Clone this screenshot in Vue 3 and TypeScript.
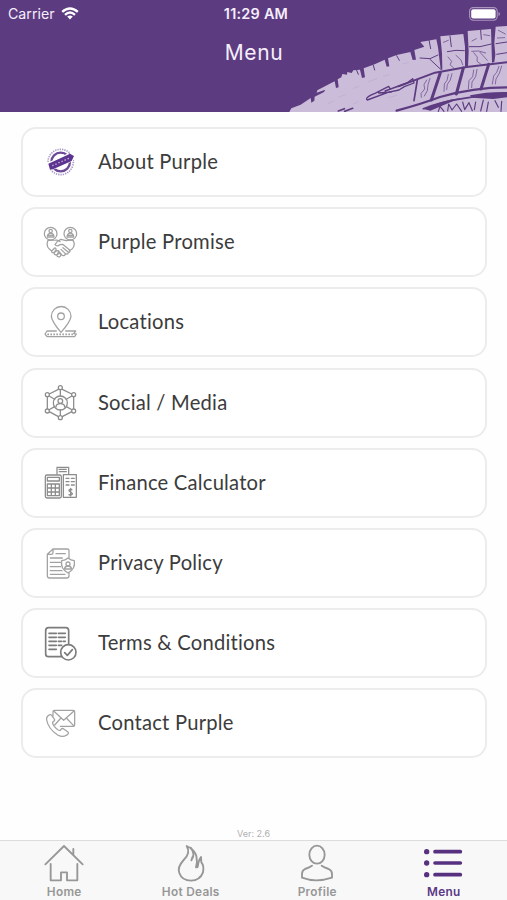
<script setup lang="ts">
type IconName = 'about' | 'promise' | 'locations' | 'social' | 'finance' | 'privacy' | 'terms' | 'contact'

interface MenuItem {
  label: string
  icon: IconName
  box: string
}

interface Tab {
  label: string
  icon: string
  active?: boolean
}

const items: MenuItem[] = [
  { label: 'About Purple', icon: 'about', box: '0 -9 150 150' },
  { label: 'Purple Promise', icon: 'promise', box: '0 -3 150 150' },
  { label: 'Locations', icon: 'locations', box: '0 238 150 150' },
  { label: 'Social / Media', icon: 'social', box: '0 -1 150 150' },
  { label: 'Finance Calculator', icon: 'finance', box: '0 239 150 150' },
  { label: 'Privacy Policy', icon: 'privacy', box: '0 -6 150 150' },
  { label: 'Terms & Conditions', icon: 'terms', box: '0 234 150 150' },
  { label: 'Contact Purple', icon: 'contact', box: '0 -5 150 150' },
]

const tabs: Tab[] = [
  { label: 'Home', icon: 'home' },
  { label: 'Hot Deals', icon: 'deals' },
  { label: 'Profile', icon: 'profile' },
  { label: 'Menu', icon: 'menu', active: true },
]
</script>

<template>
  <div class="screen">
    <header class="header">
      <svg class="tyre" viewBox="0 0 681 336" aria-hidden="true">
        <path class="rubber" d="M28 336 L34 325 L62 314 L92 294 L94 308 L103 302 L104 290 L132 276 L136 269 L110 278 L112 271 L155 248 L164 244 L168 264 L176 262 L173 238 L184 232 L187 222 L201 224 L202 216 L215 219 L220 211 L240 209 L246 234 L255 232 L251 205 L284 193 L314 179 L320 200 L328 199 L324 175 L350 165 L391 156 L398 180 L408 179 L403 150 L433 140 L421 126 L469 118 L474 142 L482 208 L487 210 L486 160 L481 109 L550 102 L555 140 L555 200 L564 200 L566 155 L563 93 L633 87 L636 188 L643 186 L646 165 L643 130 L647 80 L681 78 L681 336 Z" />
        <g class="cut">
          <path stroke-width="7" d="M350 332 Q430 310 480 291 Q580 262 681 262" />
          <path stroke-width="6" d="M355 259 L465 218 L560 201 L681 187" />
          <path stroke-width="9" d="M481 218 L454 300 M550 204 L529 282 M626 193 L603 267" />
          <path stroke-width="5" d="M412 240 L402 302" />
          <path stroke-width="5" d="M430 326 Q530 288 681 284" />
          <path stroke-width="3" d="M420 174 L450 176 L474 165 M450 178 L482 208 M447 120 L452 146 M502 155 L528 151 L553 152 M510 108 L514 140 M568 140 L600 140 L634 132 M602 91 L604 118 M648 131 L681 126 M650 163 L681 158 M350 167 L358 181 M280 196 L284 210 M230 211 L235 223" />
          <path stroke-width="2" d="M504 171 L515 184 L510 194 L521 204 M528 166 L543 180 L548 194 M581 158 L592 171 L591 184 L603 193 M600 157 L622 181 M440 240 L432 254 L434 267 L423 281 L424 292 M450 235 L444 254 L442 272 L433 288 M505 223 L501 241 L493 252 L492 274 M516 221 L511 240 L502 253 L500 269 M581 210 L578 230 L567 242 L565 266 M591 208 L587 230 L576 246 L575 263 M657 199 L650 217 L641 228 L637 252 M665 198 L658 220 L648 237 L646 252 M611 104 L629 107 M655 91 L676 102 M652 114 L674 113 M576 123 L589 116 M490 127 L505 121 M575 154 L596 153 L617 159" />
          <path stroke-width="4" d="M262 300 Q252 293 285 280 L326 259 L331 267 L315 273 L381 249 L398 236 L402 249 L373 260 L357 270 L320 278 L296 279 L334 276 M262 300 L330 275" />
          <path stroke-width="5" d="M175 333 L193 326 M194 334 L218 325" />
          <path stroke-width="3.5" d="M475 334 L480 319 L492 334 M503 333 L506 312 L516 330 L530 312 L545 334 M548 306 L554 329 L567 308 L577 332 M587 306 L583 329 M610 300 L602 333 M625 306 L620 334 M645 302 L655 322 M665 304 L663 334" />
        </g>
        <path class="gouge" d="M570 286 Q620 275 681 276 L681 292 L640 297 L575 293 Z M430 327 Q485 301 543 294 L520 303 L451 332 Z" />
        <path class="streak" d="M220 312 l14 -7 M265 245 l25 -9 M177 291 l20 -7 M220 265 l16 -6 M310 228 l18 -4 M325 293 l25 -7 M145 310 l17 -7 M370 191 l15 -3" />
      </svg>

      <div class="status">
        <div class="carrier">
          <span>Carrier</span>
          <svg class="wifi" viewBox="0 0 18 13" aria-hidden="true">
            <path d="M1.2 4.8 Q9 -2 16.8 4.8 M4 7.8 Q9 3.4 14 7.8" />
            <path class="dot" d="M6.2 9.6 Q9 7.4 11.8 9.6 L9 12.5 Z" />
          </svg>
        </div>
        <span class="clock">11:29 AM</span>
        <div class="power">
          <svg class="battery" viewBox="0 0 32 14" aria-hidden="true">
            <rect class="shell" x=".6" y=".6" width="27.6" height="12.6" rx="3.6" />
            <rect class="charge" x="2.2" y="2.2" width="24.4" height="9.4" rx="2" />
            <path class="tip" d="M29.5 4.9 q1.5 .6 1.5 2.1 t-1.5 2.1z" />
          </svg>
        </div>
      </div>
      <h1 class="title">Menu</h1>
    </header>

    <main class="list">
      <a v-for="item in items" :key="item.icon" class="card">
        <svg class="icon" :class="item.icon" :viewBox="item.box" aria-hidden="true">
          <g v-if="item.icon === 'about'">
            <circle class="ring-dots" cx="74" cy="66" r="38" />
            <circle class="ring" cx="74" cy="66" r="28" />
            <path class="gap" d="M34 85 L31 70 L105 36 L118 48 L110 64 L44 92 Z" />
            <path class="ribbon" d="M37 71 L99 43 L98 39 L114 48 L107 63 L51 88 L42 89 Z" />
            <path class="stitches" d="M49 77 L101 54" />
          </g>
          <g v-else-if="item.icon === 'promise'">
            <circle cx="44" cy="47" r="19" /><circle cx="103" cy="47" r="19" />
            <circle cx="44" cy="39" r="5" /><circle cx="103" cy="39" r="5" />
            <path d="M34 57 Q34 46 44 46 Q54 46 54 57 Z M93 57 Q93 46 103 46 Q113 46 113 57 Z M37 52 H51 M96 52 H110" />
            <path d="M36 67 Q29 84 40 93 L47 99 M36 67 Q50 68 62 66 L72 71 M65 69 L75 64 L90 68 Q105 65 112 68 Q119 83 108 93 L100 98 M65 69 L57 80 Q63 87 71 80 L80 79 L101 96 Q104 102 97 103 L81 89 M97 103 Q96 111 88 107 L75 94 M88 107 Q87 115 79 112 L67 98 M47 99 L56 90 Q61 90 60 96 L54 104 Q46 105 47 99 M54 104 L62 98 Q69 98 67 104 L62 111 Q54 111 54 104 M62 111 L70 106 Q77 107 73 115 L70 117 Q63 117 62 111" />
          </g>
          <g v-else-if="item.icon === 'locations'">
            <path d="M75 344 Q47 311 46 296 A29 29 0 0 1 105 296 Q104 311 75 344 Z" />
            <circle cx="75" cy="296" r="10" />
            <path d="M61 340 H33 L27 349 L33 357 H116 L121 349 L113 348 L119 340 H89" />
            <path class="hatch" d="M34 350 H112" />
          </g>
          <g v-else-if="item.icon === 'social'">
            <path d="M73 30 L113 50 V97 L73 118 L34 97 V50 Z M73 34 V53 M73 95 V112 M38 52 L56 63 M109 52 L91 63 M38 95 L56 85 M109 95 L91 85" />
            <circle cx="73" cy="74" r="21" />
            <circle cx="73" cy="68" r="7" />
            <path d="M60 86 Q60 76 73 76 Q86 76 86 86" />
            <g class="nodes">
              <circle cx="73" cy="28" r="6" /><circle cx="113" cy="49" r="6" /><circle cx="113" cy="98" r="6" />
              <circle cx="73" cy="118" r="6" /><circle cx="34" cy="98" r="6" /><circle cx="34" cy="49" r="6" />
            </g>
          </g>
          <g v-else-if="item.icon === 'finance'">
            <path d="M63 287 V267 H98 V286 M69 273 H91 M70 280 H91" />
            <rect x="28" y="290" width="48" height="69" rx="5" />
            <rect x="34" y="297" width="36" height="11" />
            <path d="M34 317 H70 V352 H34 Z M34 329 H70 M34 341 H70 M46 317 V352 M58 317 V352" />
            <path d="M82 289 H121 V357 H82 Z" />
            <path class="lines" d="M90 300 H99 M106 300 H115 M90 310 H99 M106 310 H115 M90 320 H99 M106 320 H115" />
            <path d="M108 334 Q104 331 100 334 T104 342 T108 348 Q104 352 99 349 M104 330 V353" />
          </g>
          <g v-else-if="item.icon === 'privacy'">
            <path d="M99 54 V31 Q99 27 94 27 H51 L34 43 V107 Q34 114 41 114 H92 Q99 114 99 107 V99 M51 27 V38 Q51 43 46 43 H34" />
            <path d="M60 41 H88 M43 54 H79 M43 67 H74 M43 80 H74 M43 92 H78 M43 103 H87" />
            <path d="M96 54 Q104 61 115 62 Q119 87 96 99 Q73 87 77 62 Q88 61 96 54 Z" />
            <circle cx="96" cy="72" r="6" /><path d="M85 87 Q87 78 96 78 Q105 78 107 87 Z" />
          </g>
          <g v-else-if="item.icon === 'terms'">
            <path d="M76 350 H38 Q29 350 29 341 V272 Q29 263 38 263 H89 Q98 263 98 272 V313" />
            <path d="M39 280 H61 M67 280 H88 M39 292 H61 M67 292 H88 M39 304 H61 M67 304 H77 M82 304 H88 M39 316 H61 M67 316 H77 M39 328 H61" />
            <circle cx="97" cy="337" r="23" />
            <path d="M86 338 L94 346 L109 329" />
          </g>
          <g v-else>
            <path d="M51 50 V36 Q51 32 55 32 H112 Q116 32 116 36 V76 Q116 80 112 80 H73 M54 35 L83 62 L113 35 M56 76 L75 55 M112 77 L91 55" />
            <path d="M42 45 Q30 50 32 61 Q37 88 65 106 Q80 114 91 107 Q101 101 95 96 L82 87 Q77 85 73 92 Q68 95 55 80 Q46 68 52 66 Q59 61 54 57 L46 46 Q44 44 42 45 Z" />
          </g>
        </svg>
        <span class="label">{{ item.label }}</span>
      </a>
    </main>

    <p class="version">Ver: 2.6</p>

    <nav class="tabs">
      <a v-for="tab in tabs" :key="tab.icon" class="tab" :class="{ active: tab.active }">
        <svg class="tab-icon" viewBox="0 0 120 120" aria-hidden="true">
          <g v-if="tab.icon === 'home'">
            <path d="M4 73 L60 18 L116 73 M88 43 V27 M20 72 V121 H51 V97 H69 V121 H100 V72" />
          </g>
          <g v-else-if="tab.icon === 'deals'">
            <path d="M47 18 Q60 39 38 60 Q18 82 25 99 Q33 122 60 122 Q87 121 96 97 Q100 77 91 67 L90 51 Q82 62 80 81 L75 82 Q80 64 76 48 Q70 28 47 18 Z" />
            <path d="M59 23 Q75 43 61 61 L65 50" />
          </g>
          <g v-else-if="tab.icon === 'profile'">
            <ellipse cx="60" cy="44" rx="23" ry="27" />
            <path d="M45 77 Q38 82 24 87 Q15 92 15 101 V113 Q57 129 105 113 V101 Q105 92 95 87 Q81 82 74 77" />
          </g>
          <g v-else>
            <g class="bullets"><circle cx="8" cy="35" r="8" /><circle cx="8" cy="69" r="8" /><circle cx="8" cy="104" r="8" /></g>
            <path class="bars" d="M33 35 H109 M33 69 H109 M33 104 H109" />
          </g>
        </svg>
        <span>{{ tab.label }}</span>
      </a>
    </nav>
  </div>
</template>

<style>
body {
  margin: 0;
  background: #fefefe;
}
</style>

<style scoped>
.screen {
  display: flex;
  flex-direction: column;
  width: 507px;
  height: 900px;
  overflow: hidden;
  background: #fefefe;
  font-family: Inter, "Liberation Sans", sans-serif;
}
svg {
  fill: none;
  stroke-linecap: round;
  stroke-linejoin: round;
}
.header {
  position: relative;
  flex: none;
  height: 112px;
  background: #5d3b80;
  color: #f5eefb;
}
.tyre {
  position: absolute;
  right: 0;
  bottom: 0;
  width: 227px;
  height: 112px;
}
.rubber { fill: #cbbdd9; }
.cut { stroke: #5d3b80; }
.gouge { fill: #5d3b80; }
.streak { stroke: #bcaacd; stroke-width: 2; }
.status {
  position: relative;
  display: grid;
  grid-template-columns: 1fr auto 1fr;
  align-items: center;
  height: 27px;
  padding: 0 6px 0 8px;
  font-size: 14.2px;
}
.carrier {
  display: flex;
  align-items: center;
  gap: 6px;
}
.wifi {
  width: 18px;
  height: 13px;
  stroke: #fff;
  stroke-width: 2.4;
  stroke-linecap: butt;
}
.wifi .dot { fill: #fff; stroke: none; }
.clock {
  padding-left: 3px;
  font-weight: 600;
  font-size: 14.4px;
  letter-spacing: 0.25px;
}
.power {
  display: flex;
  justify-content: flex-end;
}
.battery { width: 32px; height: 14px; }
.shell { stroke: #a995be; stroke-width: 1.1; }
.charge { fill: #fff; }
.tip { fill: #a995be; }
.title {
  position: relative;
  margin: 12px 0 0;
  padding-left: 1px;
  text-align: center;
  font-weight: 400;
  font-size: 21px;
  line-height: 28px;
  letter-spacing: 0.6px;
}
.list {
  display: flex;
  flex-direction: column;
  gap: 10.2px;
  padding: 15px 20px 0 21px;
}
.card {
  display: flex;
  align-items: center;
  box-sizing: border-box;
  height: 70px;
  padding-left: 13px;
  border: 2px solid #ececed;
  border-radius: 15px;
  background: #fff;
}
.icon {
  flex: none;
  width: 50px;
  height: 50px;
  stroke: #a2a2a2;
  stroke-width: 3.8;
}
.social, .finance { stroke: #8c8c8c; }
.terms { stroke: #7c7c7c; stroke-width: 5; }
.nodes { fill: #fff; }
.hatch { stroke-width: 5; stroke-dasharray: 5 4; stroke-linecap: butt; }
.ring-dots { stroke: #a99aca; stroke-width: 5; stroke-dasharray: 4 3; stroke-linecap: butt; }
.ring { stroke: #6c4a98; stroke-width: 7; }
.gap { fill: #fff; stroke: none; }
.ribbon { fill: #5d3591; stroke: none; }
.stitches { stroke: #cbbce0; stroke-width: 4; stroke-dasharray: 4 6; stroke-linecap: butt; }
.label {
  margin: -2px 0 0 12px;
  font-family: Lato, "Liberation Sans", sans-serif;
  font-size: 20.2px;
  line-height: 28px;
  letter-spacing: 0.22px;
  color: #3c3c3c;
}
.version {
  margin: auto 0 0;
  text-align: center;
  font-size: 9px;
  line-height: 12px;
  color: #b0b0b0;
}
.tabs {
  display: grid;
  grid-template-columns: repeat(4, 1fr);
  flex: none;
  box-sizing: border-box;
  height: 60px;
  padding-left: 1px;
  border-top: 1px solid #dcdcdc;
  background: #f8f8f8;
}
.tab {
  display: flex;
  flex-direction: column;
  align-items: center;
  color: #979797;
  font-size: 11.8px;
  font-weight: 600;
  line-height: 16px;
  letter-spacing: 0.3px;
}
.tab-icon {
  width: 40px;
  height: 40px;
  margin: -1px 0 4px;
  overflow: visible;
  stroke: #979797;
  stroke-width: 5.6;
}
.tab.active { color: #5b3886; }
.active .bars { stroke: #573080; stroke-width: 11; }
.active .bullets { fill: #573080; stroke: none; }
</style>
